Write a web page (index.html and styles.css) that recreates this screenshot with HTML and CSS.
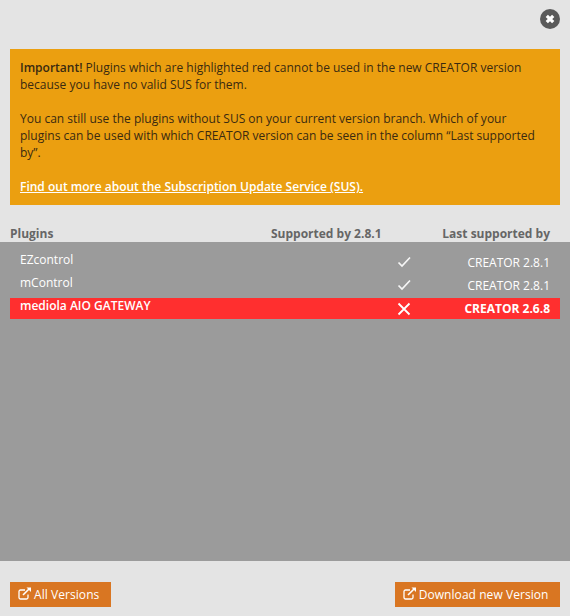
FILE: index.html
```html
<!DOCTYPE html>
<html lang="en">
<head>
<meta charset="utf-8">
<title>Plugins</title>
<link rel="stylesheet" href="styles.css">
</head>
<body>
<div class="dialog">
  <div class="top">
    <button class="close" aria-label="Close">
      <svg width="10" height="10" viewBox="0 0 10 10"><path d="M1.800 1.800 L8.200 8.200 M8.200 1.800 L1.800 8.200" stroke="#fff" stroke-width="3.200" fill="none"/></svg>
    </button>
  </div>
  <div class="notice">
    <p><b class="strong">Important!</b> Plugins which are highlighted red cannot be used in the new CREATOR version because you have no valid SUS for them.</p>
    <p>You can still use the plugins without SUS on your current version branch. Which of your plugins can be used with which CREATOR version can be seen in the column “Last supported by”.</p>
    <p><a class="notice-link" href="#">Find out more about the Subscription Update Service (SUS).</a></p>
  </div>
  <div class="head">
    <span class="c-name">Plugins</span>
    <span class="c-sup">Supported by 2.8.1</span>
    <span class="c-last">Last supported by</span>
  </div>
  <div class="list">
    <div class="row">
      <span class="c-name name">EZcontrol</span>
      <span class="c-icon"><svg width="14" height="12" viewBox="0 0 14 12"><path d="M1.500 6.500 L5 10 L13 1.500" stroke="#f6f6f6" stroke-width="1.700" fill="none"/></svg></span>
      <span class="c-last ver">CREATOR 2.8.1</span>
    </div>
    <div class="row">
      <span class="c-name name">mControl</span>
      <span class="c-icon"><svg width="14" height="12" viewBox="0 0 14 12"><path d="M1.500 6.500 L5 10 L13 1.500" stroke="#f6f6f6" stroke-width="1.700" fill="none"/></svg></span>
      <span class="c-last ver">CREATOR 2.8.1</span>
    </div>
    <div class="row bad">
      <span class="c-name name">mediola AIO GATEWAY</span>
      <span class="c-icon"><svg width="14" height="14" viewBox="0 0 14 14"><path d="M1.500 1.500 L12.500 12.500 M12.500 1.500 L1.500 12.500" stroke="#fff" stroke-width="1.800" fill="none"/></svg></span>
      <span class="c-last ver">CREATOR 2.6.8</span>
    </div>
  </div>
  <div class="actions">
    <a class="btn" href="#"><svg class="ext" width="14" height="13" viewBox="0 0 14 13"><path d="M10 7.5 V10.5 A1.5 1.5 0 0 1 8.500 12 H2.500 A1.500 1.500 0 0 1 1 10.500 V4.500 A1.500 1.500 0 0 1 2.500 3 H7" stroke="#fff" stroke-width="1.300" fill="none"/><path d="M5 8 L11 2" stroke="#fff" stroke-width="1.600" fill="none"/><path d="M8.500 0.500 H13 V5 Z" fill="#fff"/></svg>All Versions</a>
    <a class="btn" href="#"><svg class="ext" width="14" height="13" viewBox="0 0 14 13"><path d="M10 7.5 V10.5 A1.5 1.5 0 0 1 8.500 12 H2.500 A1.500 1.500 0 0 1 1 10.500 V4.500 A1.500 1.500 0 0 1 2.500 3 H7" stroke="#fff" stroke-width="1.300" fill="none"/><path d="M5 8 L11 2" stroke="#fff" stroke-width="1.600" fill="none"/><path d="M8.500 0.500 H13 V5 Z" fill="#fff"/></svg>Download new Version</a>
  </div>
</div>
</body>
</html>
```
FILE: styles.css
```css
* { box-sizing: border-box; }
html, body { margin: 0; padding: 0; }
body {
  width: 570px;
  height: 616px;
  background: #e4e4e4;
  font-family: "Open Sans", sans-serif;
  font-size: 12px;
  line-height: 17px;
  overflow: hidden;
}
.dialog { display: flex; flex-direction: column; height: 616px; }
.top { height: 49px; display: flex; justify-content: flex-end; padding: 9px 10px 0 0; }
.close {
  width: 20px; height: 20px; border: 0; padding: 0; border-radius: 50%;
  background: #5a5a5a; display: flex; align-items: center; justify-content: center;
}
.notice {
  margin: 0 10px;
  height: 156px;
  padding: 10px 20px 0 10px;
  background: #eb9f10;
  color: #3a2a10;
}
.notice p { margin: 0 0 17px; }
.strong { font-weight: 600; }
.notice-link { color: #fff; font-weight: 600; text-decoration: underline; }
.head {
  height: 37px;
  margin: 0 10px;
  padding-top: 20px;
  display: flex;
  font-weight: 700;
  color: #666;
}
.c-name { flex: 1; }
.c-sup { width: 111px; margin-right: 60px; }
.c-last { text-align: right; }
.head .c-last { width: 108px; margin-right: 10px; }
.list { height: 319px; background: #9b9b9b; padding: 10px 10px 0; }
.row { display: flex; height: 23px; color: #fff; }
.row .c-last { width: 118px; padding-right: 10px; padding-top: 2px; }
.row .name { padding-left: 10px; margin-top: -1px; }
.c-icon { width: 14px; margin-right: 31px; padding-top: 4px; display: flex; align-items: flex-start; }
.row.bad { height: 21px; background: #ff2f2f; font-weight: 700; }
.row.bad .name { font-weight: 600; }
.actions {
  display: flex; justify-content: space-between;
  padding: 21px 10px 0;
}
.btn {
  height: 25px; padding: 4px 11.500px 0 8px;
  background: #d97622; color: #fff; text-decoration: none;
  letter-spacing: 0.06px;
  display: flex; align-items: flex-start;
}
.ext { margin: 1px 2px 0 0; flex: none; }
```
